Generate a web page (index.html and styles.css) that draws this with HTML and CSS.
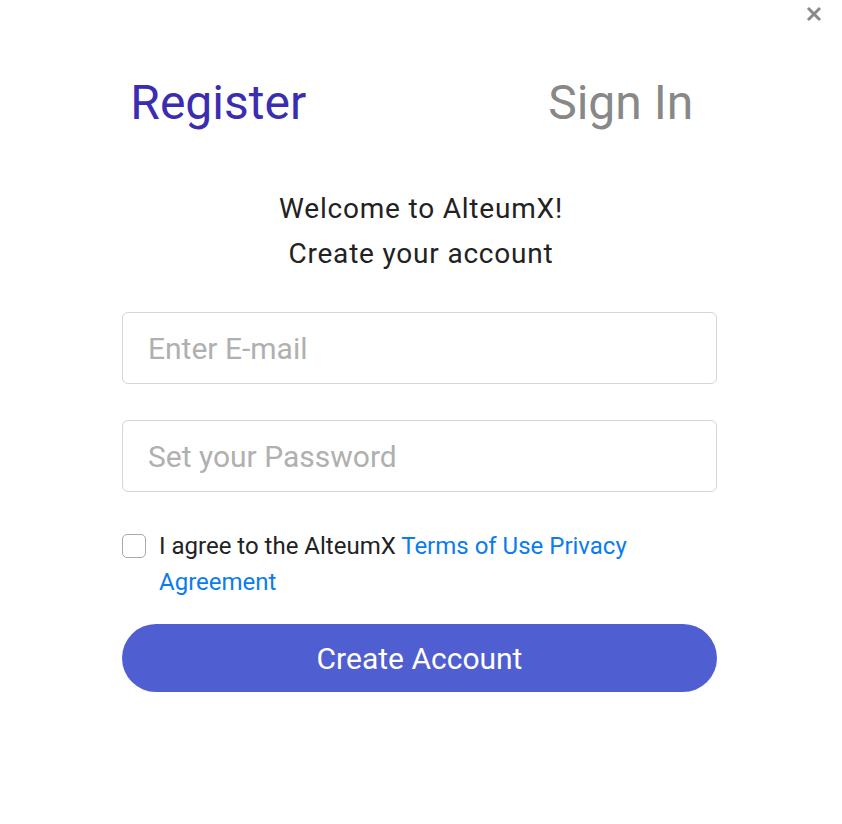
FILE: index.html
```html
<!DOCTYPE html>
<html lang="en">
<head>
<meta charset="utf-8">
<title>Register</title>
<link rel="stylesheet" href="styles.css">
</head>
<body>
<div class="modal">
  <button class="close" aria-label="Close">
    <svg width="16" height="16" viewBox="0 0 16 16"><path d="M2 2 L14 14 M14 2 L2 14" stroke="#8a8a8a" stroke-width="3" stroke-linecap="butt"/></svg>
  </button>
  <div class="tabs">
    <div class="tab active">Register</div>
    <div class="tab">Sign In</div>
  </div>
  <div class="welcome">
    <div>Welcome to AlteumX!</div>
    <div>Create your account</div>
  </div>
  <form class="form">
    <input class="field" type="email" placeholder="Enter E-mail">
    <input class="field" type="password" placeholder="Set your Password">
    <label class="agree">
      <span class="box"></span>
      <span class="agree-text">I agree to the AlteumX <a href="#">Terms of Use</a> <a href="#">Privacy Agreement</a></span>
    </label>
    <button type="button" class="submit">Create Account</button>
  </form>
</div>
</body>
</html>
```
FILE: styles.css
```css
* { box-sizing: border-box; }
html, body { margin: 0; padding: 0; background: #fff; }
body { font-family: Roboto, "Noto Sans", Arial, sans-serif; }
.modal {
  position: relative;
  width: 842px;
  height: 824px;
  padding-top: 76px;
}
.close {
  position: absolute;
  top: 6px;
  right: 20px;
  border: 0;
  background: none;
  padding: 0;
  width: 16px;
  height: 16px;
  display: flex;
}
.tabs {
  display: flex;
  padding: 0 20px 0 17px;
}
.tab {
  flex: 1;
  text-align: center;
  font-size: 48px;
  line-height: 54px;
  color: #888888;
}
.tab.active { color: #3a2db2; }
.welcome {
  margin-top: 56px;
  text-align: center;
  font-size: 28px;
  letter-spacing: 0.8px;
  line-height: 45px;
  color: #222;
}
.form {
  width: 595px;
  margin: 36px 0 0 122px;
  display: flex;
  flex-direction: column;
}
.field {
  height: 72px;
  border: 1px solid #d6d6da;
  border-radius: 6px;
  padding: 0 25px;
  font-family: inherit;
  font-size: 30px;
  color: #333;
  outline: none;
  margin-bottom: 36px;
}
.field::placeholder { color: #b0b0b0; }
.agree {
  display: flex;
  align-items: flex-start;
  gap: 13px;
  font-size: 24px;
  line-height: 36px;
  color: #222;
}
.box {
  flex: none;
  width: 24px;
  height: 24px;
  border: 1px solid #a9a9ae;
  border-radius: 5px;
  margin-top: 6px;
}
.agree-text { width: 480px; }
.agree a { color: #0a7cf0; text-decoration: none; }
.submit {
  margin-top: 24px;
  height: 68px;
  border: 0;
  border-radius: 34px;
  background: #4f5ed1;
  color: #fff;
  font-family: inherit;
  font-size: 30px;
}
```
